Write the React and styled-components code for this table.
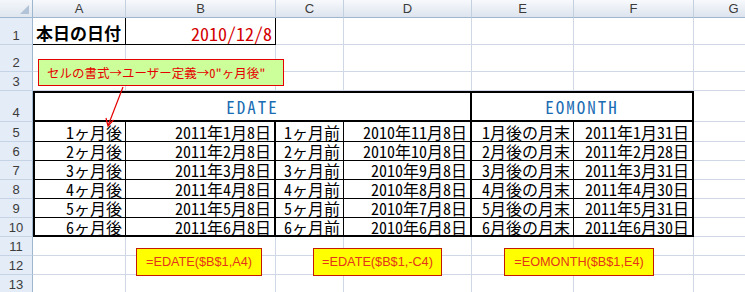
import React from 'react';
import styled, { createGlobalStyle } from 'styled-components';

const GlobalStyle = createGlobalStyle`
  html, body { margin: 0; padding: 0; background: #fff; overflow: hidden; }
  body { font-family: "Noto Sans CJK JP", sans-serif; }
`;

const COLS = [33, 93, 150, 68, 128, 102, 120, 80];
const ROWS = [18, 27, 27, 19, 31, 20, 19, 19, 19, 19, 19, 19, 19, 19];
const LETTERS = ['A', 'B', 'C', 'D', 'E', 'F', 'G'];
const GRID = '#d0d7e5';

const Sheet = styled.div`
  position: relative;
  display: grid;
  grid-template-columns: ${COLS.map((c) => c + 'px').join(' ')};
  grid-template-rows: ${ROWS.map((r) => r + 'px').join(' ')};
  width: 745px;
  height: 292px;
  overflow: hidden;
  font-family: "Noto Sans CJK JP", sans-serif;
`;

const Corner = styled.div`
  box-sizing: border-box;
  background: linear-gradient(#f4f7fb, #dfe6ef);
  border-right: 1px solid #9eb6ce;
  border-bottom: 1px solid #9eb6ce;
  display: flex;
  align-items: flex-end;
  justify-content: flex-end;
  padding: 0 3px 3px 0;
`;

const ColHead = styled.div`
  box-sizing: border-box;
  background: linear-gradient(#f7f9fc, #dde4ee);
  border-right: 1px solid #c3d0e0;
  border-bottom: 1px solid #9eb6ce;
  display: flex;
  align-items: center;
  justify-content: center;
  font: 13px "Liberation Sans", sans-serif;
  color: #3b3b3b;
`;

const RowHead = styled.div`
  box-sizing: border-box;
  background: #e4ecf7;
  border-right: 1px solid #9eb6ce;
  border-bottom: 1px solid #c5d3e4;
  display: flex;
  align-items: flex-end;
  justify-content: center;
  padding-bottom: 1px;
  font: 13px "Liberation Sans", sans-serif;
  color: #3b3b3b;
`;

const edge = (w, fallback) => (w ? `${w}px solid #000` : fallback);

const Cell = styled.div`
  box-sizing: border-box;
  grid-column: span ${(p) => p.$span || 1};
  border-top: ${(p) => edge(p.$t, 'none')};
  border-left: ${(p) => edge(p.$l, 'none')};
  border-right: ${(p) => edge(p.$r, `1px solid ${GRID}`)};
  border-bottom: ${(p) => edge(p.$b, `1px solid ${GRID}`)};
  display: flex;
  align-items: center;
  justify-content: ${(p) =>
    p.$align === 'left' ? 'flex-start' : p.$align === 'center' ? 'center' : 'flex-end'};
  padding: 0 3px;
  font-size: 16px;
  line-height: 18px;
  color: #000;
  white-space: nowrap;
  overflow: visible;
`;

const Title = styled(Cell)`
  font-size: 17px;
  font-weight: 600;
  align-items: flex-end;
  padding-bottom: 2px;
`;

const Today = styled(Title)`
  font-size: 18px;
  font-weight: 400;
  color: #d40000;
`;

const Heading = styled(Cell)`
  font-size: 17px;
  letter-spacing: 2px;
  color: #1a6cb3;
  align-items: flex-end;
  padding-bottom: 4px;
`;

const Half = styled.span`
  font-feature-settings: "hwid" 1;
`;

const Note = styled.div`
  position: absolute;
  left: 38px;
  top: 59px;
  width: 246px;
  height: 27px;
  box-sizing: border-box;
  background: #ccff99;
  border: 1px solid #e60000;
  display: flex;
  align-items: center;
  padding-left: 8px;
  font-size: 12.5px;
  color: #e60000;
  white-space: nowrap;
`;

const Formula = styled.div`
  position: absolute;
  left: ${(p) => p.$x}px;
  top: 248px;
  width: ${(p) => p.$w}px;
  height: 28px;
  box-sizing: border-box;
  background: #ffff00;
  border: 1px solid #c41a00;
  display: flex;
  align-items: center;
  justify-content: center;
  font-family: "Liberation Sans", sans-serif;
  font-size: 12.7px;
  color: #e4351b;
  white-space: nowrap;
`;

const Pointer = styled.svg`
  position: absolute;
  left: 100px;
  top: 85px;
  overflow: visible;
`;

// Latin runs use half-width glyphs, like a Gothic spreadsheet font
function Txt({ children }) {
  const parts = String(children).split(/([\x20-\x7e]+)/);
  return parts.map((p, i) =>
    /^[\x20-\x7e]+$/.test(p) ? <Half key={i}>{p}</Half> : <React.Fragment key={i}>{p}</React.Fragment>
  );
}

const ROWS_DATA = [
  ['1ヶ月後', '2011年1月8日', '1ヶ月前', '2010年11月8日', '1月後の月末', '2011年1月31日'],
  ['2ヶ月後', '2011年2月8日', '2ヶ月前', '2010年10月8日', '2月後の月末', '2011年2月28日'],
  ['3ヶ月後', '2011年3月8日', '3ヶ月前', '2010年9月8日', '3月後の月末', '2011年3月31日'],
  ['4ヶ月後', '2011年4月8日', '4ヶ月前', '2010年8月8日', '4月後の月末', '2011年4月30日'],
  ['5ヶ月後', '2011年5月8日', '5ヶ月前', '2010年7月8日', '5月後の月末', '2011年5月31日'],
  ['6ヶ月後', '2011年6月8日', '6ヶ月前', '2010年6月8日', '6月後の月末', '2011年6月30日'],
];

// right-edge weight of each table column A..F
const RIGHT = [1, 2, 1, 2, 1, 2];

function Blank({ n }) {
  return Array.from({ length: n }, (_, i) => <Cell key={i} />);
}

export default function App() {
  return (
    <>
      <GlobalStyle />
      <Sheet>
        <Corner>
          <svg width="9" height="9" viewBox="0 0 9 9">
            <polygon points="9,0 9,9 0,9" fill="#b3c3d7" />
          </svg>
        </Corner>
        {LETTERS.map((l) => (
          <ColHead key={l}>{l}</ColHead>
        ))}

        <RowHead>1</RowHead>
        <Title $align="left" $r={1} $b={1}>本日の日付</Title>
        <Today $r={1} $b={1}>
          <Txt>2010/12/8</Txt>
        </Today>
        <Blank n={5} />

        <RowHead>2</RowHead>
        <Blank n={7} />

        <RowHead>3</RowHead>
        <Blank n={7} />

        <RowHead>4</RowHead>
        <Heading $span={4} $align="center" $t={2} $l={2} $r={2} $b={2}>
          <Txt>EDATE</Txt>
        </Heading>
        <Heading $span={2} $align="center" $t={2} $r={2} $b={2}>
          <Txt>EOMONTH</Txt>
        </Heading>
        <Cell />

        {ROWS_DATA.map((row, ri) => {
          const last = ri === ROWS_DATA.length - 1;
          return (
            <React.Fragment key={ri}>
              <RowHead>{ri + 5}</RowHead>
              {row.map((v, ci) => (
                <Cell key={ci} $l={ci === 0 ? 2 : 0} $r={RIGHT[ci]} $b={last ? 2 : 1}>
                  <Txt>{v}</Txt>
                </Cell>
              ))}
              <Cell />
            </React.Fragment>
          );
        })}

        {[11, 12, 13].map((n) => (
          <React.Fragment key={n}>
            <RowHead>{n}</RowHead>
            <Blank n={7} />
          </React.Fragment>
        ))}

        <Note>
          <Txt>{'セルの書式→ユーザー定義→0"ヶ月後"'}</Txt>
        </Note>

        <Pointer width="30" height="45" viewBox="0 0 30 45">
          <line x1="23" y1="2" x2="8.3" y2="40" stroke="#e60000" strokeWidth="1.2" />
          <polyline points="6,33 8,41 13.5,35" fill="none" stroke="#e60000" strokeWidth="1.2" />
        </Pointer>

        <Formula $x={136} $w={126}>=EDATE($B$1,A4)</Formula>
        <Formula $x={313} $w={129}>=EDATE($B$1,-C4)</Formula>
        <Formula $x={504} $w={150}>=EOMONTH($B$1,E4)</Formula>
      </Sheet>
    </>
  );
}
